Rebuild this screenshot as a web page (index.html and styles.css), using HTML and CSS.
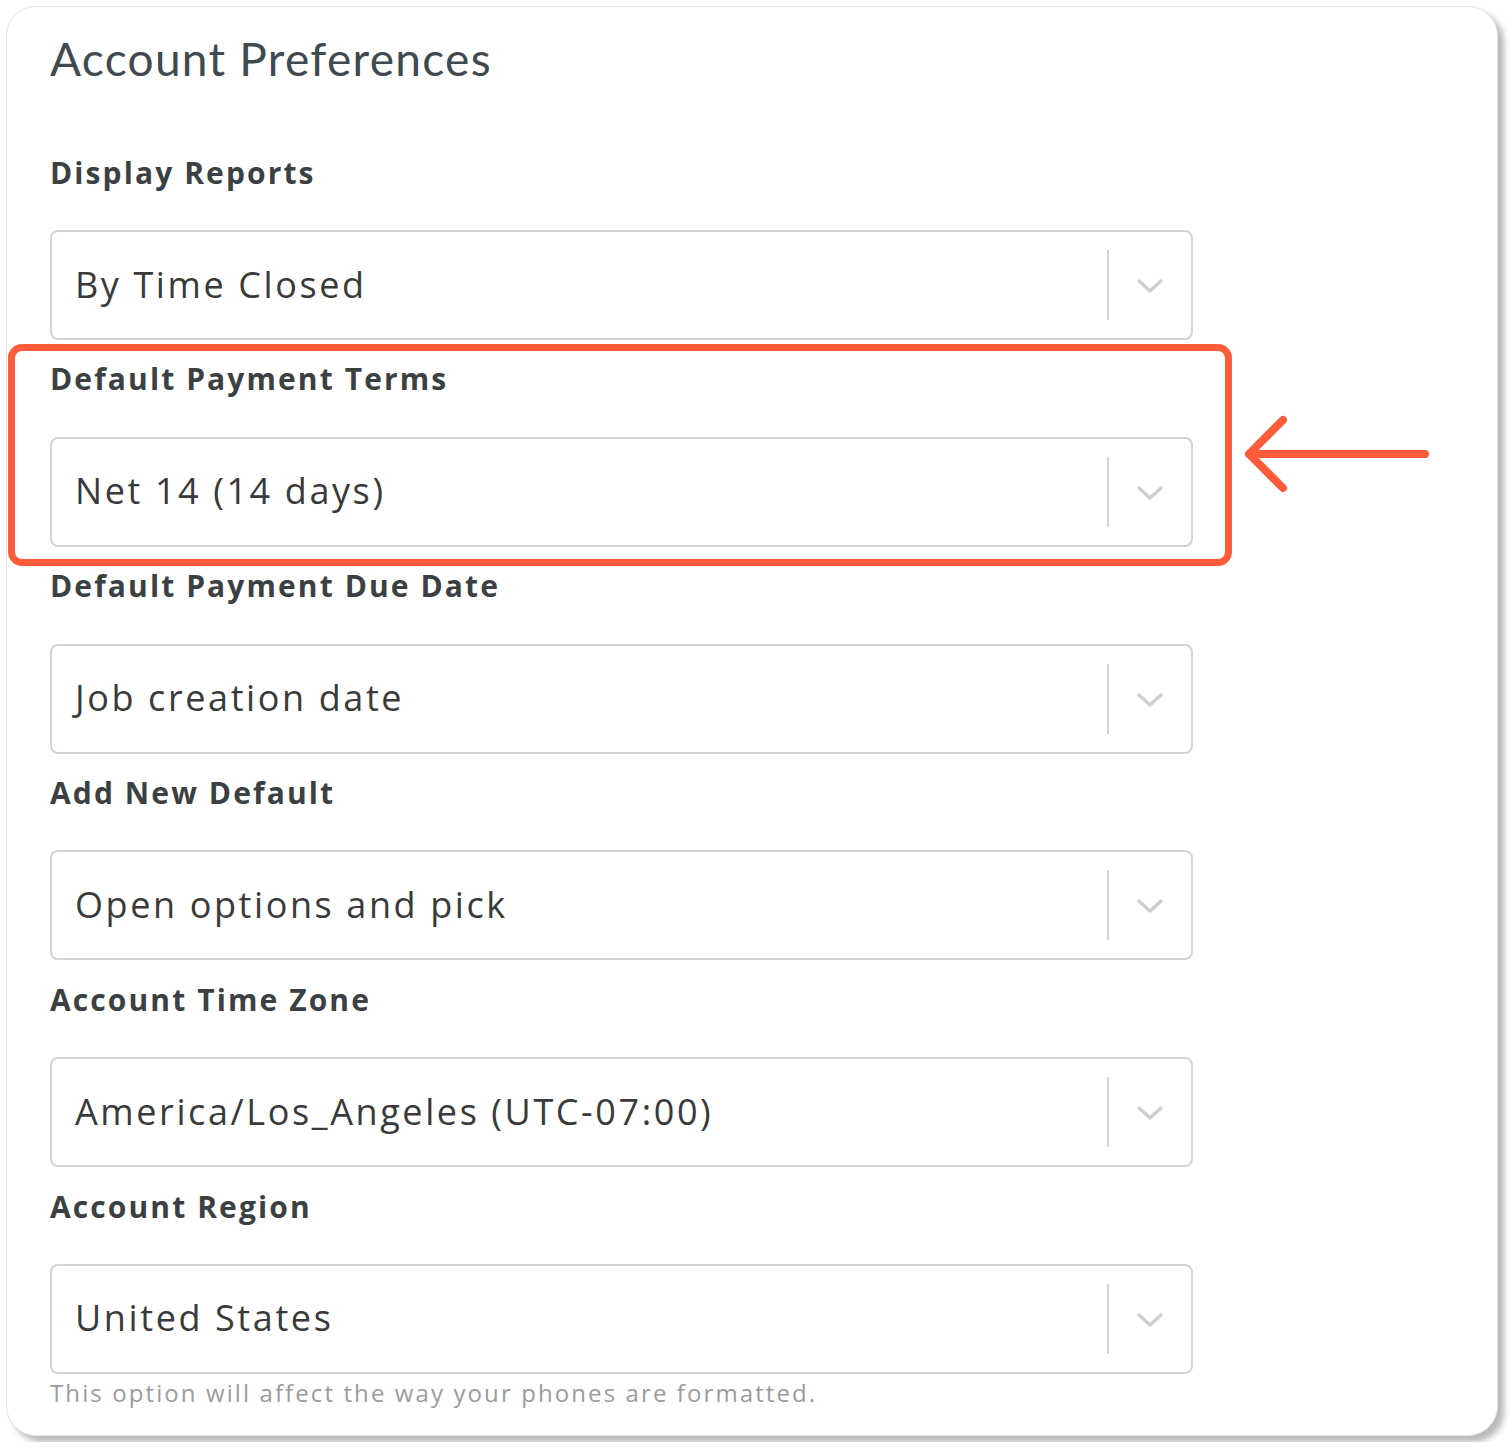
FILE: index.html
```html
<!DOCTYPE html>
<html lang="en">
<head>
<meta charset="utf-8">
<title>Account Preferences</title>
<link rel="stylesheet" href="styles.css">
</head>
<body>
<div class="card">
  <h1 class="title">Account Preferences</h1>

  <div class="field first">
    <div class="label">Display Reports</div>
    <div class="select"><span class="value">By Time Closed</span><span class="sep"></span><span class="chev"><svg width="28" height="16" viewBox="0 0 28 16"><path d="M3 3 L14 13 L25 3" fill="none" stroke="#cfcfcf" stroke-width="3.5" stroke-linecap="round" stroke-linejoin="round"/></svg></span></div>
  </div>

  <div class="field">
    <div class="label">Default Payment Terms</div>
    <div class="select"><span class="value">Net 14 (14 days)</span><span class="sep"></span><span class="chev"><svg width="28" height="16" viewBox="0 0 28 16"><path d="M3 3 L14 13 L25 3" fill="none" stroke="#cfcfcf" stroke-width="3.5" stroke-linecap="round" stroke-linejoin="round"/></svg></span></div>
  </div>

  <div class="field">
    <div class="label">Default Payment Due Date</div>
    <div class="select"><span class="value">Job creation date</span><span class="sep"></span><span class="chev"><svg width="28" height="16" viewBox="0 0 28 16"><path d="M3 3 L14 13 L25 3" fill="none" stroke="#cfcfcf" stroke-width="3.5" stroke-linecap="round" stroke-linejoin="round"/></svg></span></div>
  </div>

  <div class="field">
    <div class="label">Add New Default</div>
    <div class="select"><span class="value">Open options and pick</span><span class="sep"></span><span class="chev"><svg width="28" height="16" viewBox="0 0 28 16"><path d="M3 3 L14 13 L25 3" fill="none" stroke="#cfcfcf" stroke-width="3.5" stroke-linecap="round" stroke-linejoin="round"/></svg></span></div>
  </div>

  <div class="field">
    <div class="label">Account Time Zone</div>
    <div class="select"><span class="value">America/Los_Angeles (UTC-07:00)</span><span class="sep"></span><span class="chev"><svg width="28" height="16" viewBox="0 0 28 16"><path d="M3 3 L14 13 L25 3" fill="none" stroke="#cfcfcf" stroke-width="3.5" stroke-linecap="round" stroke-linejoin="round"/></svg></span></div>
  </div>

  <div class="field">
    <div class="label">Account Region</div>
    <div class="select"><span class="value">United States</span><span class="sep"></span><span class="chev"><svg width="28" height="16" viewBox="0 0 28 16"><path d="M3 3 L14 13 L25 3" fill="none" stroke="#cfcfcf" stroke-width="3.5" stroke-linecap="round" stroke-linejoin="round"/></svg></span></div>
    <div class="help">This option will affect the way your phones are formatted.</div>
  </div>

  <div class="highlight"></div>
  <svg class="arrow" width="190" height="84" viewBox="0 0 190 84"><path d="M4 42 H180 M38 8 L4 42 L38 76" fill="none" stroke="#ff5c39" stroke-width="8" stroke-linecap="round" stroke-linejoin="round"/></svg>
</div>
</body>
</html>
```

FILE: styles.css
```css
html, body {
  margin: 0;
  padding: 0;
  background: #ffffff;
}

body {
  padding: 6px;
  font-family: "Open Sans", "Noto Sans", sans-serif;
}

.card {
  position: relative;
  box-sizing: border-box;
  width: 1492px;
  height: 1430px;
  background: #ffffff;
  border: 1px solid #e6e6e6;
  border-radius: 30px;
  box-shadow: 6px 6px 6px rgba(0, 0, 0, 0.28);
  padding: 0 0 0 43px;
}

.title {
  margin: 0;
  height: 127px;
  padding-top: 22px;
  box-sizing: border-box;
  font-family: "Lato", "Open Sans", sans-serif;
  font-weight: 400;
  font-size: 46px;
  line-height: 60px;
  color: #3f4a50;
  letter-spacing: 1.3px;
}

.field {
  width: 1143px;
}

.label {
  height: 96.8px;
  display: flex;
  align-items: center;
  font-family: "Open Sans", sans-serif;
  font-weight: 700;
  font-size: 30px;
  color: #3b4143;
  letter-spacing: 2.1px;
  padding-bottom: 19px;
  box-sizing: border-box;
}

.first .label {
  height: 96px;
}

.select {
  box-sizing: border-box;
  height: 110px;
  border: 2px solid #d4d4d4;
  border-radius: 8px;
  display: flex;
  align-items: center;
  padding-left: 23px;
}

.value {
  flex: 1;
  font-family: "Open Sans", sans-serif;
  font-size: 36px;
  color: #3a3a3a;
  letter-spacing: 2.6px;
  padding-bottom: 2px;
}

.sep {
  width: 2px;
  height: 70px;
  background: #d4d4d4;
}

.chev {
  width: 82px;
  display: flex;
  justify-content: center;
  align-items: center;
  padding-top: 2px;
}

.chev svg {
  display: block;
}

.help {
  margin-top: 2px;
  font-family: "Open Sans", sans-serif;
  font-size: 24px;
  color: #9b9b9b;
  letter-spacing: 2.1px;
}

.highlight {
  position: absolute;
  left: 1px;
  top: 337px;
  width: 1224px;
  height: 222px;
  box-sizing: border-box;
  border: 7px solid #ff5c39;
  border-radius: 14px;
}

.arrow {
  position: absolute;
  left: 1238px;
  top: 405px;
}
```
